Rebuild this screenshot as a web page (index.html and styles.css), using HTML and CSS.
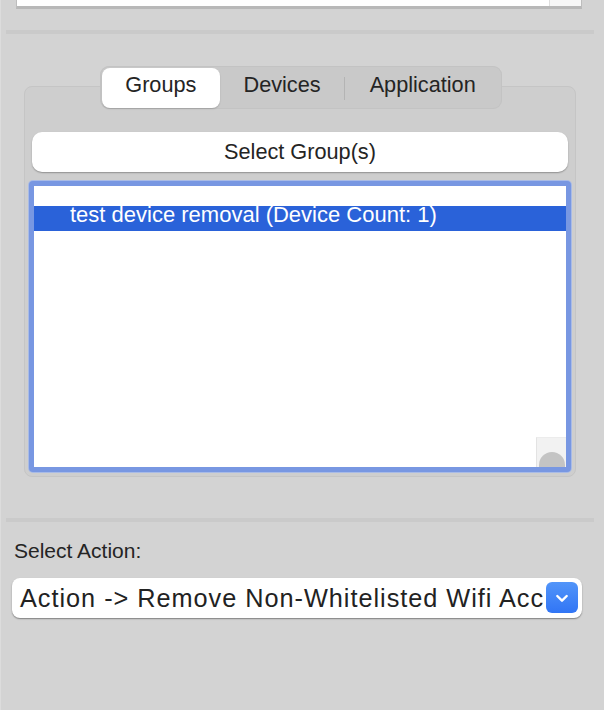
FILE: index.html
```html
<!DOCTYPE html>
<html lang="en">
<head>
<meta charset="utf-8">
<title>Groups</title>
<link rel="stylesheet" href="styles.css">
</head>
<body>
<div class="window">
  <div class="topbox">
    <div class="topbox-main"></div>
    <div class="topbox-track"></div>
  </div>
  <div class="sep sep-top"></div>

  <div class="tabview">
    <div class="tabs">
      <div class="tab tab-active">Groups</div>
      <div class="tab tab-devices">Devices</div>
      <div class="tab-divider"></div>
      <div class="tab tab-app">Application</div>
    </div>
    <div class="panel">
      <button class="select-btn" type="button">Select Group(s)</button>
      <div class="list">
        <div class="list-row selected">test device removal (Device Count: 1)</div>
        <div class="list-scroll"><div class="knob"></div></div>
      </div>
    </div>
  </div>

  <div class="sep sep-bottom"></div>

  <div class="action">
    <div class="action-label">Select Action:</div>
    <div class="select">
      <div class="select-text">Action -&gt; Remove Non-Whitelisted Wifi Acc</div>
      <div class="select-arrow">
        <svg width="16" height="16" viewBox="0 0 16 16"><polyline points="3.3,6 8,10.7 12.7,6" fill="none" stroke="#fff" stroke-width="2.4" stroke-linecap="round" stroke-linejoin="round"/></svg>
      </div>
    </div>
  </div>
</div>
</body>
</html>
```

FILE: styles.css
```css
html, body {
  margin: 0;
  padding: 0;
  background: #d3d3d3;
}

body {
  font-family: "Liberation Sans", Arial, sans-serif;
  color: #232323;
}

.window {
  width: 604px;
  height: 710px;
  overflow: hidden;
  box-shadow: inset 1px 0 0 #dcdcdc;
}

.topbox {
  display: flex;
  height: 6px;
  margin: 0 22px 0 16px;
  border-left: 1px solid #bdbdbd;
  border-right: 1px solid #bdbdbd;
  border-bottom: 3px solid #b8b8b8;
}

.topbox-main {
  flex: 1;
  background: #ffffff;
}

.topbox-track {
  width: 31px;
  background: #f7f7f7;
  border-left: 1px solid #dedede;
}

.sep {
  height: 4px;
  background: #cacaca;
  margin: 0 10px 0 6px;
}

.sep-top {
  margin-top: 21px;
}

.sep-bottom {
  margin-top: 41px;
}

/* Tab view */
.tabview {
  margin-top: 32px;
  padding: 0 28px 0 24px;
}

.tabs {
  position: relative;
  z-index: 1;
  display: flex;
  align-items: center;
  width: 402px;
  height: 43px;
  box-sizing: border-box;
  padding: 2px 2px 1px;
  margin: 0 0 -23px 76px;
  background: #c9c9c9;
  border-radius: 9px;
  box-shadow: inset 0 0 0 1px #c3c3c3;
}

.tab {
  height: 40px;
  box-sizing: border-box;
  padding-bottom: 6px;
  display: flex;
  align-items: center;
  justify-content: center;
  font-size: 21.7px;
  color: #242424;
}

.tab-active {
  width: 118px;
  background: #ffffff;
  border-radius: 8px;
  box-shadow: 0 1px 1.5px rgba(0, 0, 0, 0.18);
}

.tab-devices {
  width: 125px;
}

.tab-divider {
  width: 1px;
  height: 23px;
  background: #b4b4b4;
}

.tab-app {
  width: 155px;
}

.panel {
  background: #cecece;
  border: 1px solid #c5c5c5;
  border-radius: 8px;
  padding: 45px 3px 4px;
}

.select-btn {
  display: block;
  width: calc(100% - 8px);
  height: 40px;
  margin: 0 4px;
  padding: 0;
  border: none;
  border-radius: 10px;
  background: #ffffff;
  box-shadow: 0 1px 1.5px rgba(0, 0, 0, 0.3);
  font-family: inherit;
  font-size: 21.7px;
  color: #242424;
}

.list {
  position: relative;
  margin: 9px 1px 0;
  height: 291px;
  box-sizing: border-box;
  padding-top: 20px;
  background: #ffffff;
  border: 5px solid #7897e2;
  border-radius: 4px;
  box-shadow: 0 0 0 1px #a9bbe6;
}

.list-row {
  height: 25px;
  line-height: 17px;
  padding-left: 36px;
  font-size: 22px;
  white-space: nowrap;
}

.list-row.selected {
  background: #2a62d9;
  color: #ffffff;
}

.list-scroll {
  position: absolute;
  right: 0;
  bottom: 0;
  width: 29px;
  height: 29px;
  background: #f2f2f2;
  border-left: 1px solid #e3e3e3;
  border-top: 1px solid #ececec;
  display: flex;
  align-items: flex-end;
  justify-content: center;
}

.knob {
  width: 26px;
  height: 15px;
  background: #c4c4c4;
  border-radius: 13px 13px 0 0;
}

/* Action */
.action {
  padding: 17px 22px 0 12px;
}

.action-label {
  padding-left: 2px;
  font-size: 21px;
  color: #242424;
}

.select {
  position: relative;
  margin-top: 15px;
  height: 40px;
  background: #ffffff;
  border-radius: 8px;
  box-shadow: 0 1px 1.5px rgba(0, 0, 0, 0.4);
}

.select-text {
  margin-right: 30px;
  padding-left: 8px;
  overflow: hidden;
  white-space: nowrap;
  font-size: 25.3px;
  letter-spacing: 0.97px;
  line-height: 40px;
  color: #222222;
}

.select-arrow {
  position: absolute;
  right: 4px;
  top: 4px;
  width: 32px;
  height: 31px;
  border-radius: 6px;
  background: linear-gradient(#5295f9, #3175f5);
  display: flex;
  align-items: center;
  justify-content: center;
}
```
